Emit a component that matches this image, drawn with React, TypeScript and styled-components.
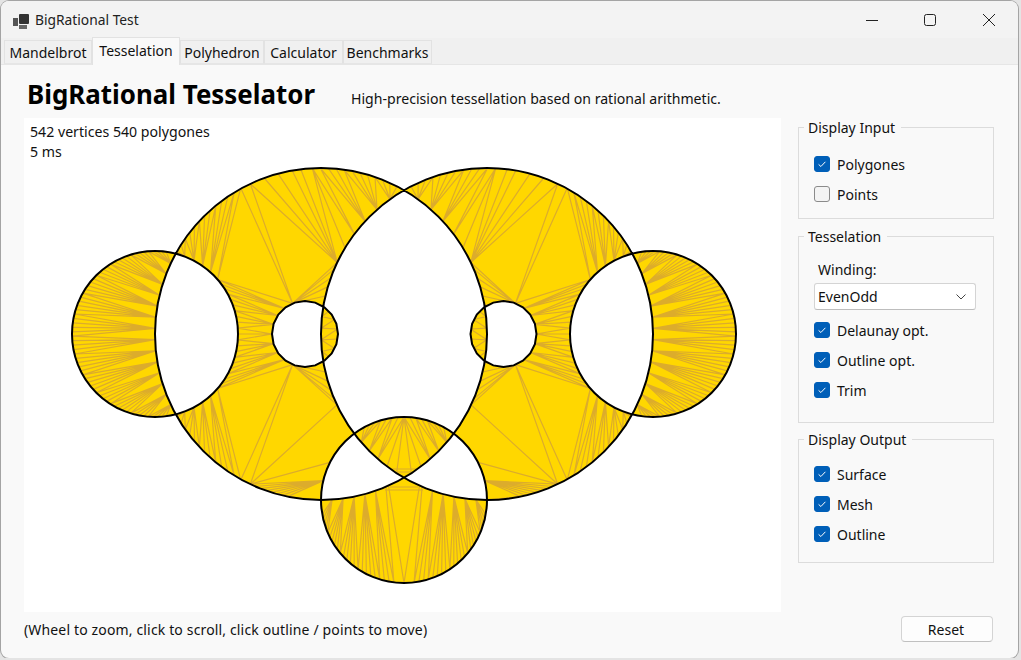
import React from 'react';
import styled, { createGlobalStyle } from 'styled-components';

const GlobalStyle = createGlobalStyle`
    html, body {
        margin: 0;
        padding: 0;
        background: #e4e4e4;
    }
    body {
        font-family: 'Noto Sans', 'Open Sans', sans-serif;
        font-size: 14px;
        color: #111;
        overflow: hidden;
    }
`;

const Window = styled.div`
    display: flex;
    flex-direction: column;
    box-sizing: border-box;
    width: 1017px;
    height: 657px;
    margin: 1px 0 0 1px;
    background: #f9f9f9;
    border-radius: 8px;
    overflow: hidden;
    box-shadow: 0 0 0 1px #a4a4a4;
`;

const TitleBar = styled.div`
    display: flex;
    align-items: center;
    height: 37px;
    flex: none;
    background: #f3f3f3;
    padding-left: 10px;
`;

const TitleText = styled.span`
    margin-left: 6px;
    font-size: 13.8px;
    color: #222;
`;

const WindowButtons = styled.div`
    display: flex;
    margin-left: auto;
`;

const WindowButton = styled.div`
    display: flex;
    align-items: center;
    justify-content: center;
    width: 58.5px;
    height: 37px;
`;

const TabStrip = styled.div`
    display: flex;
    align-items: flex-end;
    height: 27px;
    flex: none;
    box-sizing: border-box;
    padding-left: 3px;
    background: #f0f0f0;
    border-bottom: 1px solid #e6e6e6;
`;

const Tab = styled.div<{ $active?: boolean; $w: number }>`
    display: flex;
    align-items: center;
    justify-content: center;
    box-sizing: border-box;
    width: ${(p) => p.$w}px;
    height: ${(p) => (p.$active ? 28 : 24)}px;
    margin-bottom: ${(p) => (p.$active ? -1 : 0)}px;
    padding-bottom: ${(p) => (p.$active ? 2 : 0)}px;
    background: ${(p) => (p.$active ? '#f9f9f9' : '#f0f0f0')};
    border: 1px solid #e2e2e2;
    border-bottom: ${(p) => (p.$active ? 'none' : '1px solid #e6e6e6')};
    font-size: 14px;
    color: #111;
`;

const Body = styled.div`
    display: flex;
    flex-direction: column;
    flex: 1;
    padding-left: 23px;
    padding-right: 24px;
`;

const Header = styled.div`
    display: flex;
    align-items: baseline;
    height: 53px;
    flex: none;
    padding-left: 3px;
`;

const Title = styled.h1`
    margin: 0;
    font-size: 25.9px;
    line-height: 58px;
    font-weight: 700;
    color: #000;
`;

const Subtitle = styled.span`
    margin-left: 36px;
    font-size: 14.1px;
    color: #111;
`;

const Main = styled.div`
    display: flex;
    gap: 17px;
    height: 494px;
    flex: none;
`;

const Canvas = styled.div`
    position: relative;
    width: 757px;
    height: 494px;
    background: #fff;
    flex: none;

    svg {
        display: block;
    }
`;

const Stats = styled.div`
    position: absolute;
    left: 6px;
    top: 4px;
    line-height: 20px;
    font-size: 14.15px;
    color: #111;
`;

const Sidebar = styled.div`
    display: flex;
    flex-direction: column;
    width: 196px;
    margin-top: -2px;
`;

const Group = styled.fieldset<{ $h: number; $after: number }>`
    box-sizing: border-box;
    flex: none;
    height: ${(p) => p.$h}px;
    margin: 0 0 ${(p) => p.$after}px;
    padding: 0;
    border: 1px solid #dcdcdc;
    min-width: 0;

    legend {
        margin-left: 5px;
        padding: 2px 6px 0 4px;
        line-height: 20px;
        font-size: 14px;
        color: #111;
    }
`;

const Stack = styled.div<{ $top: number }>`
    display: flex;
    flex-direction: column;
    padding: ${(p) => p.$top}px 0 0 15px;
`;

const Row = styled.div`
    display: flex;
    align-items: center;
    gap: 7px;
    height: 30px;
    font-size: 14px;
    color: #111;
`;

const Box = styled.span<{ $on?: boolean }>`
    display: flex;
    align-items: center;
    justify-content: center;
    box-sizing: border-box;
    width: 16px;
    height: 16px;
    border-radius: 3px;
    background: ${(p) => (p.$on ? '#005fb8' : '#f4f4f4')};
    border: 1px solid ${(p) => (p.$on ? '#005fb8' : '#8b8b8b')};
`;

const FieldLabel = styled.div`
    margin-left: 4px;
    line-height: 20px;
    font-size: 14px;
    color: #111;
`;

const Select = styled.div`
    display: flex;
    align-items: center;
    justify-content: space-between;
    box-sizing: border-box;
    width: 162px;
    height: 27px;
    margin: 3px 0 5px;
    padding: 0 9px 0 3px;
    background: #fff;
    border: 1px solid #d4d4d4;
    border-bottom-color: #bdbdbd;
    border-radius: 3px;
    font-size: 14px;
    color: #111;
`;

const Footer = styled.div`
    display: flex;
    justify-content: space-between;
    align-items: flex-start;
    padding-top: 4px;
`;

const Hint = styled.span`
    line-height: 28px;
    font-size: 14px;
    letter-spacing: 0.15px;
    color: #111;
`;

const ResetButton = styled.div`
    display: flex;
    align-items: center;
    justify-content: center;
    box-sizing: border-box;
    width: 92px;
    height: 26px;
    margin-right: 1px;
    padding-right: 2px;
    background: #fdfdfd;
    border: 1px solid #d4d4d4;
    border-bottom-color: #c0c0c0;
    border-radius: 4px;
    font-size: 14px;
    color: #111;
`;

type Pt = [number, number];
type Circle = [number, number, number];

const L: Circle = [321, 334, 166];
const R: Circle = [487, 334, 166];
const S: Circle = [155, 334, 83];
const I: Circle = [305, 334, 33];
const B: Circle = [404, 500, 83];

const at = (c: Circle, deg: number): Pt => {
    const a = (deg * Math.PI) / 180;
    return [c[0] + c[2] * Math.cos(a), c[1] + c[2] * Math.sin(a)];
};

const arc = (c: Circle, from: number, to: number, step: number): Pt[] => {
    const n = Math.max(1, Math.round(Math.abs(to - from) / step));
    const out: Pt[] = [];
    for (let i = 0; i <= n; i++) out.push(at(c, from + ((to - from) * i) / n));
    return out;
};

const dist = (a: Pt, b: Pt) => Math.hypot(a[0] - b[0], a[1] - b[1]);

// strip between two boundaries, always taking the shorter diagonal
const zip = (a: Pt[], b: Pt[]): [Pt, Pt][] => {
    const out: [Pt, Pt][] = [[a[0], b[0]]];
    let i = 0;
    let j = 0;
    while (i < a.length - 1 || j < b.length - 1) {
        const nextA = i < a.length - 1 ? dist(a[i + 1], b[j]) : Infinity;
        const nextB = j < b.length - 1 ? dist(a[i], b[j + 1]) : Infinity;
        if (nextA < nextB) i++;
        else j++;
        out.push([a[i], b[j]]);
    }
    return out;
};

const fan = (p: Pt, pts: Pt[]): [Pt, Pt][] => pts.map((q) => [p, q]);

const topApex = at(I, -112);
const lowApex = at(I, 112);
const lensTop = at(R, -154.5);
const lensLow = at(R, 154.7);

const leftHalf: [Pt, Pt][] = [
    // left crescent
    ...zip(arc(S, 284, 76, 3.1), arc(L, 209, 151, 3.9)),
    // big crescent, upper part
    ...zip(arc(S, -76, -41, 7), arc(L, -150, -119, 2.6)),
    ...fan(topApex, [at(L, -118.8), at(L, -115.2), lensTop]),
    ...zip(arc(S, -41, 0, 4), arc(I, -112, -180, 18)),
    ...fan(topApex, arc(R, -157, -170, 3)),
    ...fan(lensTop, [at(L, -115.2), at(L, -110), at(L, -105), at(L, -100), at(L, -97), at(L, -93)]),
    ...zip(arc(L, -93, -60, 2.8), arc(R, -154.5, -120, 6)),
    // big crescent, lower part
    ...zip(arc(S, 76, 41, 7), arc(L, 150, 119, 2.6)),
    ...fan(lowApex, [at(L, 118.8), at(L, 115.2), lensLow]),
    ...zip(arc(S, 41, 0, 4), arc(I, 112, 180, 18)),
    ...fan(lowApex, arc(R, 157, 170, 3)),
    [lensLow, at(L, 115.2)],
    ...zip(arc(R, 154.7, 143.3, 2.8), arc(B, -126.7, -153, 7)),
    ...zip(arc(B, -153, -180, 12), arc(L, 115.2, 90, 2)),
    // sliver of the inner circle
    ...zip(arc(I, -61, 61, 18), arc(R, 190, 170, 4)),
    // bottom circle, upper lens
    ...zip(arc(B, -126.7, -90, 4.2), arc(R, 143.3, 123, 4.5)),
    [[392, 469], [416, 469]],
    [[396, 472], [412, 472]],
    // bottom circle, lower part
    ...zip(arc(B, 180, 97, 3.3), arc(L, 90, 67, 3.8)),
    [at(L, 66), at(B, 90)],
    [[390, 487], [418, 487]],
    [[385, 490], [423, 490]],
];

const meshLines = leftHalf.concat(leftHalf.map(([a, b]) => [[808 - a[0], a[1]], [808 - b[0], b[1]]] as [Pt, Pt]));
const meshPath = meshLines.map(([a, b]) => `M${a[0].toFixed(1)} ${a[1].toFixed(1)}L${b[0].toFixed(1)} ${b[1].toFixed(1)}`).join('');

const circlePath = (c: Circle) => `M${c[0] - c[2]} ${c[1]}a${c[2]} ${c[2]} 0 1 0 ${c[2] * 2} 0a${c[2]} ${c[2]} 0 1 0 ${-c[2] * 2} 0Z`;

const polyPath = (c: Circle, sides: number) => {
    const pts: string[] = [];
    for (let i = 0; i < sides; i++) {
        const p = at(c, (i * 360) / sides);
        pts.push(`${p[0].toFixed(1)} ${p[1].toFixed(1)}`);
    }
    return `M${pts.join('L')}Z`;
};

const shapePath = [
    circlePath(L),
    circlePath(R),
    circlePath(S),
    circlePath([653, 334, 83]),
    circlePath(B),
    polyPath(I, 20),
    polyPath([503.5, 334, 33], 20),
].join('');

const Tesselation = () => (
    <svg width={757} height={494} viewBox='24 118 757 494'>
        <defs>
            <clipPath id='fillClip'>
                <path d={shapePath} clipRule='evenodd' />
            </clipPath>
        </defs>
        <path d={shapePath} fill='#ffd700' fillRule='evenodd' />
        <path d={meshPath} stroke='#dcac2c' strokeWidth={1.2} fill='none' clipPath='url(#fillClip)' />
        <path d={shapePath} stroke='#000' strokeWidth={2} fill='none' />
    </svg>
);

const CheckRow = ({ label, on = true }: { label: string; on?: boolean }) => (
    <Row>
        <Box $on={on}>
            {on && (
                <svg width={12} height={12} viewBox='0 0 12 12'>
                    <path d='M2.6 6.4 L4.9 8.5 L9.4 3.8' stroke='#fff' strokeWidth={1} fill='none' />
                </svg>
            )}
        </Box>
        {label}
    </Row>
);

const AppIcon = () => (
    <svg width={18} height={18} viewBox='0 0 18 18'>
        <rect x={2} y={7} width={5} height={8} fill='#555' />
        <rect x={8} y={3} width={10} height={10} rx={1} fill='#333' />
        <rect x={8} y={14} width={8} height={4} fill='#666' />
    </svg>
);

const App = () => {
    return (
        <>
            <GlobalStyle />
            <Window>
                <TitleBar>
                    <AppIcon />
                    <TitleText>BigRational Test</TitleText>
                    <WindowButtons>
                        <WindowButton>
                            <svg width={14} height={14} viewBox='0 0 14 14'>
                                <path d='M1 7.5 H13' stroke='#222' strokeWidth={1} />
                            </svg>
                        </WindowButton>
                        <WindowButton>
                            <svg width={14} height={14} viewBox='0 0 14 14'>
                                <rect x={1.5} y={1.5} width={11} height={11} rx={2} stroke='#222' strokeWidth={1} fill='none' />
                            </svg>
                        </WindowButton>
                        <WindowButton>
                            <svg width={14} height={14} viewBox='0 0 14 14'>
                                <path d='M1 1 L13 13 M13 1 L1 13' stroke='#222' strokeWidth={1} />
                            </svg>
                        </WindowButton>
                    </WindowButtons>
                </TitleBar>
                <TabStrip>
                    <Tab $w={88}>Mandelbrot</Tab>
                    <Tab $w={88} $active>
                        Tesselation
                    </Tab>
                    <Tab $w={84}>Polyhedron</Tab>
                    <Tab $w={79}>Calculator</Tab>
                    <Tab $w={89}>Benchmarks</Tab>
                </TabStrip>
                <Body>
                    <Header>
                        <Title>BigRational Tesselator</Title>
                        <Subtitle>High-precision tessellation based on rational arithmetic.</Subtitle>
                    </Header>
                    <Main>
                        <Canvas>
                            <Tesselation />
                            <Stats>
                                <div>542 vertices 540 polygones</div>
                                <div>5 ms</div>
                            </Stats>
                        </Canvas>
                        <Sidebar>
                            <Group $h={103} $after={6}>
                                <legend>Display Input</legend>
                                <Stack $top={11}>
                                    <CheckRow label='Polygones' />
                                    <CheckRow label='Points' on={false} />
                                </Stack>
                            </Group>
                            <Group $h={198} $after={5}>
                                <legend>Tesselation</legend>
                                <Stack $top={13}>
                                    <FieldLabel>Winding:</FieldLabel>
                                    <Select>
                                        EvenOdd
                                        <svg width={10} height={6} viewBox='0 0 10 6'>
                                            <path d='M0.5 0.5 L5 5 L9.5 0.5' stroke='#444' strokeWidth={1} fill='none' />
                                        </svg>
                                    </Select>
                                    <CheckRow label='Delaunay opt.' />
                                    <CheckRow label='Outline opt.' />
                                    <CheckRow label='Trim' />
                                </Stack>
                            </Group>
                            <Group $h={135} $after={0}>
                                <legend>Display Output</legend>
                                <Stack $top={9}>
                                    <CheckRow label='Surface' />
                                    <CheckRow label='Mesh' />
                                    <CheckRow label='Outline' />
                                </Stack>
                            </Group>
                        </Sidebar>
                    </Main>
                    <Footer>
                        <Hint>(Wheel to zoom, click to scroll, click outline / points to move)</Hint>
                        <ResetButton>Reset</ResetButton>
                    </Footer>
                </Body>
            </Window>
        </>
    );
};

export default App;
